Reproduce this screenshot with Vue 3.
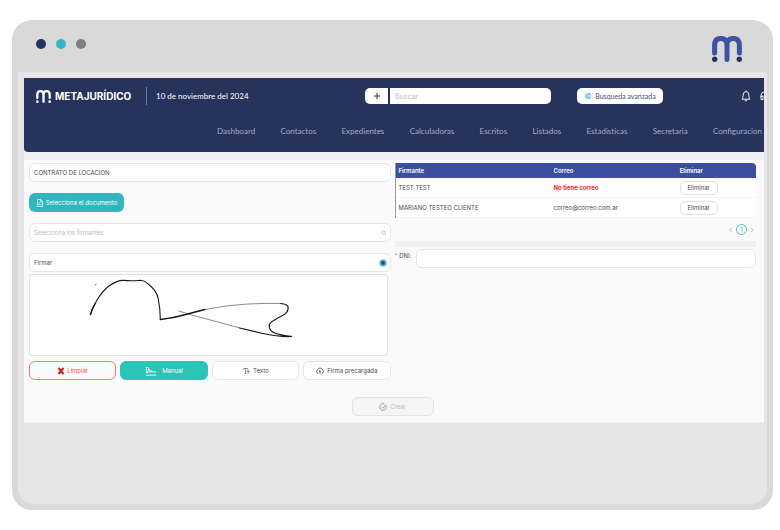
<script setup>
import { ref } from 'vue'

const navItems = [
  'Dashboard', 'Contactos', 'Expedientes', 'Calculadoras', 'Escritos',
  'Listados', 'Estadisticas', 'Secretaria', 'Configuracion'
]

const signers = ref([
  { name: 'TEST TEST', mail: '' },
  { name: 'MARIANO TESTEO CLIENTE', mail: 'correo@correo.com.ar' }
])

const contract = ref('CONTRATO DE LOCACION')
const section = ref('Firmar')
const mode = ref('manual')

function removeSigner(index) {
  signers.value.splice(index, 1)
}
</script>

<template>
  <div class="window">
    <div class="titlebar">
      <div class="dots">
        <span class="dot navy"></span>
        <span class="dot teal"></span>
        <span class="dot gray"></span>
      </div>
      <svg class="mark" viewBox="0 0 30 26" aria-hidden="true">
        <path d="M2.6 17V9.5Q2.6 2.4 8.7 2.4Q15 2.4 15 9V23.5M15 9Q15 2.4 21.3 2.4Q27.4 2.4 27.4 9.5V17" fill="none" stroke="#3f52a3" stroke-width="5" stroke-linecap="round" />
        <circle cx="2.7" cy="23.3" r="2.7" fill="#25335d" />
        <circle cx="27.3" cy="23.3" r="2.7" fill="#25335d" />
      </svg>
    </div>

    <div class="screen">
      <div class="app">
        <header class="header">
          <div class="topline">
            <a class="brand" href="#">
              <svg class="brand-mark" viewBox="0 0 30 26" aria-hidden="true">
                <path d="M2.6 16V9.5Q2.6 2.4 8.7 2.4Q15 2.4 15 9V23.5M15 9Q15 2.4 21.3 2.4Q27.4 2.4 27.4 9.5V16" fill="none" stroke="#fff" stroke-width="4.6" stroke-linecap="round" />
                <circle cx="2.7" cy="23.3" r="2.6" fill="#fff" />
                <circle cx="27.3" cy="23.3" r="2.6" fill="#fff" />
              </svg>
              <span>METAJURÍDICO</span>
            </a>
            <span class="date">10 de noviembre del 2024</span>
            <div class="search">
              <button class="plus" type="button" aria-label="Agregar">
                <svg viewBox="0 0 8 8"><path d="M4 1v6M1 4h6" stroke="#333" stroke-width="1" /></svg>
              </button>
              <input class="search-input" type="text" placeholder="Buscar" aria-label="Buscar" />
            </div>
            <button class="advanced" type="button">
              <svg viewBox="0 0 8 8"><path d="M1 2h6M1 4h6M1 6h6M5 1v2M3 3v2M5 5v2" stroke="#38a8d8" stroke-width=".8" /></svg>
              Busqueda avanzada
            </button>
            <div class="tools">
              <button class="tool" type="button" aria-label="Notificaciones">
                <svg viewBox="0 0 10 12"><path d="M5 .5v1M1 9.2h8Q7.8 7.8 7.8 5Q7.8 1.6 5 1.6Q2.2 1.6 2.2 5Q2.2 7.8 1 9.2ZM3.9 9.6Q4 11 5 11Q6 11 6.1 9.6" fill="none" stroke="#fff" stroke-width=".9" stroke-linejoin="round" /></svg>
              </button>
              <button class="tool" type="button" aria-label="Soporte">
                <svg viewBox="0 0 10 12"><path d="M1 7V5.5Q1 1.7 5 1.7Q9 1.7 9 5.5V7M1 6h2v3.6H1ZM9 6H7v3.6h2ZM9 9.6Q9 11 6 11" fill="none" stroke="#fff" stroke-width=".9" stroke-linejoin="round" /></svg>
              </button>
            </div>
          </div>
          <nav class="nav">
            <a v-for="item in navItems" :key="item" href="#">{{ item }}</a>
          </nav>
        </header>

        <main class="content">
          <div class="columns">
            <section class="left">
              <input v-model="contract" class="field" type="text" aria-label="Contrato" />
              <button class="upload" type="button">
                <svg viewBox="0 0 8 8"><path d="M1.5.6h3.3L6.7 2.5v5H1.5ZM4.6.8v2h2M2.6 4h2M2.6 5.5h1.2M4.5 5.2l.8.8 1.2-1.3" fill="none" stroke="#fff" stroke-width=".7" /></svg>
                Selecciona el documento
              </button>
              <div class="field-wrap">
                <input class="field" type="text" placeholder="Selecciona los firmantes" aria-label="Firmantes" />
                <svg class="lens" viewBox="0 0 8 8"><circle cx="3.2" cy="3.2" r="2.2" fill="none" stroke="#aaa" stroke-width=".9" /><path d="M5 5l2.2 2.2" stroke="#aaa" stroke-width="1" /></svg>
              </div>
              <div class="sign">
                <div class="field-wrap">
                  <input v-model="section" class="field" type="text" aria-label="Tipo de firma" />
                  <svg class="badge" viewBox="0 0 8 8"><circle cx="4" cy="4" r="3.8" fill="#7cc6e3" /><circle cx="4" cy="4" r="2.4" fill="#2673a8" /><path d="M2.4 3l1.4-.6.6 1.2 1.2.5-.8 1.5-1.1-.8Z" fill="#173c70" /></svg>
                </div>
                <div class="pad">
                  <svg viewBox="0 0 357 80" role="img" aria-label="Firma">
                    <g fill="none" stroke="#16161c" stroke-linecap="round" stroke-linejoin="round">
                      <path d="M60.5 39.5C63 31 70 18 79 11Q87 5 94 5.300Q101 6.200 111 5.200Q115 5.600 118.500 9Q127 16 128.500 24Q130.500 34 130.500 44.500" stroke-width="1.100" />
                      <path d="M60.500 39.500Q61.500 35 65 29M130.500 44.500Q144 43 156 39.500L175 34.500" stroke-width="1.400" />
                      <path d="M175 34.500Q197 30 218 29Q236 28 251 28.500" stroke-width=".5" />
                      <path d="M251 28.500Q259 29 258.500 33Q258.500 38 252 41Q240 47 239.500 50Q239.500 56 245 58Q250 60 262 61.500Q249 62 233 58.500L210 53" stroke-width="1.200" />
                      <path d="M210 53L179 44.500Q164 41 149 36" stroke-width=".5" />
                      <path d="M65.500 9.500h.6" stroke-width=".7" />
                    </g>
                  </svg>
                </div>
              </div>
              <div class="modes">
                <button class="mode clear" type="button">
                  <svg viewBox="0 0 8 8"><path d="M1.500 1l5 6M6.500 1l-5 6" stroke="#b92819" stroke-width="2" /></svg>
                  Limpiar
                </button>
                <button class="mode" :class="{ active: mode === 'manual' }" type="button" @click="mode = 'manual'">
                  <svg class="wide" viewBox="0 0 12 10"><path d="M1.500 7V1.500Q3 .5 3.500 2.500L3 6.500H1.500M3.500 3Q5.500 3 5 6.500L6.500 4.500L7 6.500L8.500 5L9 6h2M.8 9.200h10.400" fill="none" stroke="currentColor" stroke-width=".9" /></svg>
                  Manual
                </button>
                <button class="mode" :class="{ active: mode === 'texto' }" type="button" @click="mode = 'texto'">
                  <svg viewBox="0 0 8 8"><path d="M1.800 2.800V1.500h4v1.300M3.600 1.500v5M2.700 6.500h1.800M4.900 4.700V4h2.600v.7M6.200 4v2.600" fill="none" stroke="currentColor" stroke-width=".6" /></svg>
                  Texto
                </button>
                <button class="mode" :class="{ active: mode === 'precargada' }" type="button" @click="mode = 'precargada'">
                  <svg viewBox="0 0 8 8"><path d="M2.200 6.200Q.5 6 .5 4.400Q.5 3 1.800 2.800Q2.300 1 4 1Q5.700 1 6.200 2.800Q7.500 3 7.500 4.400Q7.500 6 5.800 6.200M4 7V3.500M2.900 4.600L4 3.500l1.100 1.100" fill="none" stroke="currentColor" stroke-width=".8" /></svg>
                  Firma precargada
                </button>
              </div>
            </section>

            <section class="right">
              <table class="signers">
                <thead>
                  <tr><th class="c-name">Firmante</th><th class="c-mail">Correo</th><th>Eliminar</th></tr>
                </thead>
                <tbody>
                  <tr v-for="(signer, i) in signers" :key="signer.name">
                    <td>{{ signer.name }}</td>
                    <td :class="{ missing: !signer.mail }">{{ signer.mail || 'No tiene correo' }}</td>
                    <td><button class="remove" type="button" @click="removeSigner(i)">Eliminar</button></td>
                  </tr>
                </tbody>
              </table>
              <div class="pager">
                <button class="arrow" type="button" aria-label="Anterior"><svg viewBox="0 0 4 6"><path d="M3.300.8L.8 3l2.500 2.200" fill="none" stroke="#bbb" stroke-width=".8" /></svg></button>
                <button class="page" type="button">1</button>
                <button class="arrow" type="button" aria-label="Siguiente"><svg viewBox="0 0 4 6"><path d="M.7.8L3.200 3L.7 5.200" fill="none" stroke="#bbb" stroke-width=".8" /></svg></button>
              </div>
              <div class="rule"></div>
              <div class="dni">
                <label for="dni"><span class="req">*</span> DNI:</label>
                <input id="dni" class="field" type="text" />
              </div>
            </section>
          </div>
          <button class="create" type="button" disabled>
            <svg viewBox="0 0 8 8"><path d="M7.200 3.300A3.300 3.300 0 1 1 5.400 1M2.500 3.800L4 5.300L7.200 1.500" fill="none" stroke="#888" stroke-width=".8" /></svg>
            Crear
          </button>
        </main>
      </div>
    </div>
  </div>
</template>

<style>
body {
  background: #fff;
}
</style>

<style scoped>
* {
  box-sizing: border-box;
}

.window {
  display: flex;
  flex-direction: column;
  min-height: calc(100vh - 40px);
  margin: 20px 7px 20px 12px;
  padding: 0 6px 6px;
  border-radius: 20px;
  background: #d9d9d9;
  color: #4b4b4b;
  font-family: Inter, "Liberation Sans", sans-serif;
  font-size: 6px;
  line-height: 8px;
}

button,
input {
  margin: 0;
  font: inherit;
  color: inherit;
}

button {
  display: flex;
  align-items: center;
  justify-content: center;
  padding: 0;
  border: 0;
  background: none;
  cursor: pointer;
}

button svg {
  flex: none;
  width: 8px;
  height: 8px;
}

a {
  color: inherit;
  text-decoration: none;
}

.titlebar {
  display: flex;
  align-items: center;
  justify-content: space-between;
  height: 52px;
  padding: 4px 25px 0 18px;
}

.dots {
  display: flex;
  gap: 10px;
  padding-bottom: 8px;
}

.dot {
  width: 10px;
  height: 10px;
  border-radius: 50%;
}

.navy { background: #25335d; }
.teal { background: #35b6c0; }
.gray { background: #7e7e7e; }

.mark {
  width: 30px;
  height: 26px;
  margin-top: 2px;
}

.screen {
  flex: 1;
  padding: 6px 3px 6px 6px;
  border-radius: 0 0 16px 16px;
  background: #e5e5e5;
}

.app {
  border-bottom: 1px solid #eee;
  background: #fafafa;
}

.header {
  height: 74px;
  padding-left: 12px;
  overflow: hidden;
  border-bottom-left-radius: 4px;
  background: #25335d;
  color: #fff;
}

.topline {
  display: flex;
  align-items: center;
  height: 36px;
}

.brand {
  display: flex;
  flex: none;
  align-items: center;
  gap: 4px;
  width: 111px;
  height: 18px;
  border-right: 1px solid #6b7594;
  font-size: 10px;
  font-weight: 700;
}

.brand-mark {
  width: 15px;
  height: 13px;
}

.date {
  flex: 1;
  padding-left: 9px;
  font-family: Lato, Inter, sans-serif;
  font-size: 8px;
}

.search {
  display: flex;
  flex: none;
  gap: 2px;
  width: 186px;
}

.plus {
  width: 23px;
  height: 16px;
  border-radius: 5px 0 0 5px;
  background: #fff;
}

.search-input {
  flex: 1;
  min-width: 0;
  height: 16px;
  padding: 0 5px;
  border: 0;
  border-radius: 0 5px 5px 0;
  background: #fff;
  color: #444;
  font-size: 7px;
}

.advanced {
  flex: none;
  gap: 3px;
  width: 86px;
  height: 16px;
  margin-left: 26px;
  border-radius: 5px;
  background: #fff;
  color: #46527a;
  font-family: Lato, Inter, sans-serif;
  font-size: 7px;
}

.tools {
  display: flex;
  flex: none;
  gap: 9px;
  width: 101px;
  padding-left: 78px;
}

.tool svg {
  width: 10px;
  height: 12px;
}

.nav {
  display: flex;
  justify-content: space-between;
  padding: 13px 2px 0 181px;
  color: #a5acc3;
  font-family: Lato, Inter, sans-serif;
  font-size: 8px;
}

.content {
  padding: 11px 8px 6px 5px;
  background: linear-gradient(#eff0f4 8px, #fafafa 8px);
}

.columns {
  display: grid;
  grid-template-columns: minmax(0, 1fr) minmax(0, 1fr);
  gap: 4px;
}

.left {
  display: flex;
  flex-direction: column;
  gap: 11px;
}

.field {
  display: block;
  width: 100%;
  height: 19px;
  padding: 0 4px;
  border: 1px solid #e6e6e6;
  border-radius: 6px;
  background: #fff;
}

.field::placeholder,
.search-input::placeholder {
  color: #bbb;
  opacity: 1;
}

.field-wrap {
  position: relative;
}

.lens,
.badge {
  position: absolute;
  top: 7px;
  right: 4px;
  width: 6px;
  height: 6px;
}

.badge {
  top: 6px;
  width: 8px;
  height: 8px;
}

.upload {
  gap: 2px;
  width: 95px;
  height: 19px;
  border-radius: 6px;
  background: #31b6bf;
  color: #fff;
}

.sign {
  display: flex;
  flex-direction: column;
  gap: 2px;
}

.pad {
  margin-right: 3px;
  border: 1px solid #e2e2e2;
  border-radius: 3px;
  background: #fff;
}

.pad svg {
  display: block;
  width: 100%;
  height: 80px;
}

.modes {
  display: grid;
  grid-template-columns: repeat(4, 1fr);
  gap: 4px;
  margin-top: -6px;
}

.mode {
  gap: 3px;
  height: 19px;
  border: 1px solid #e6e6e6;
  border-radius: 6px;
  background: #fff;
}

.mode .wide {
  width: 12px;
  height: 10px;
  margin-right: 2px;
}

.mode.active {
  border-color: #2bc4b6;
  background: #2bc4b6;
  color: #fff;
}

.mode.clear {
  gap: 2px;
  border-color: #ff7875;
  background: #fafafa;
  color: #ff4d4f;
}

.signers {
  width: 100%;
  border-collapse: separate;
  border-spacing: 0;
  border-left: 1px solid #999;
  table-layout: fixed;
  background: #fff;
  text-align: left;
}

.signers th {
  height: 15px;
  padding: 0 3px;
  background: #3c4f9f;
  color: #fff;
  font-weight: 600;
}

.signers th:last-child {
  border-top-right-radius: 4px;
}

.c-name { width: 43%; }
.c-mail { width: 35%; }

.signers td {
  height: 20px;
  padding: 0 3px;
  border-bottom: 1px solid #f5f5f5;
}

.signers .missing {
  color: #f5222d;
  font-weight: 700;
}

.remove {
  width: 38px;
  height: 14px;
  border: 1px solid #e2e2e2;
  border-radius: 5px;
  background: #fff;
}

.pager {
  display: flex;
  align-items: center;
  justify-content: flex-end;
  gap: 3px;
  padding: 6px 2px 6px 0;
}

.arrow svg {
  width: 4px;
  height: 6px;
}

.page {
  width: 11px;
  height: 11px;
  border: 1px solid #45c0c8;
  border-radius: 50%;
  color: #31b6bf;
}

.rule {
  height: 6px;
  background: #f0f0f0;
}

.dni {
  display: flex;
  gap: 4px;
  padding-top: 2px;
}

.dni label {
  flex: none;
  width: 17px;
  padding-top: 3px;
  white-space: nowrap;
}

.req {
  color: #ff4d4f;
}

.create {
  gap: 3px;
  width: 82px;
  height: 19px;
  margin: 17px auto 0;
  border: 1px solid #e2e2e2;
  border-radius: 6px;
  background: #f5f5f5;
  color: #bdbdbd;
  cursor: default;
}
</style>
